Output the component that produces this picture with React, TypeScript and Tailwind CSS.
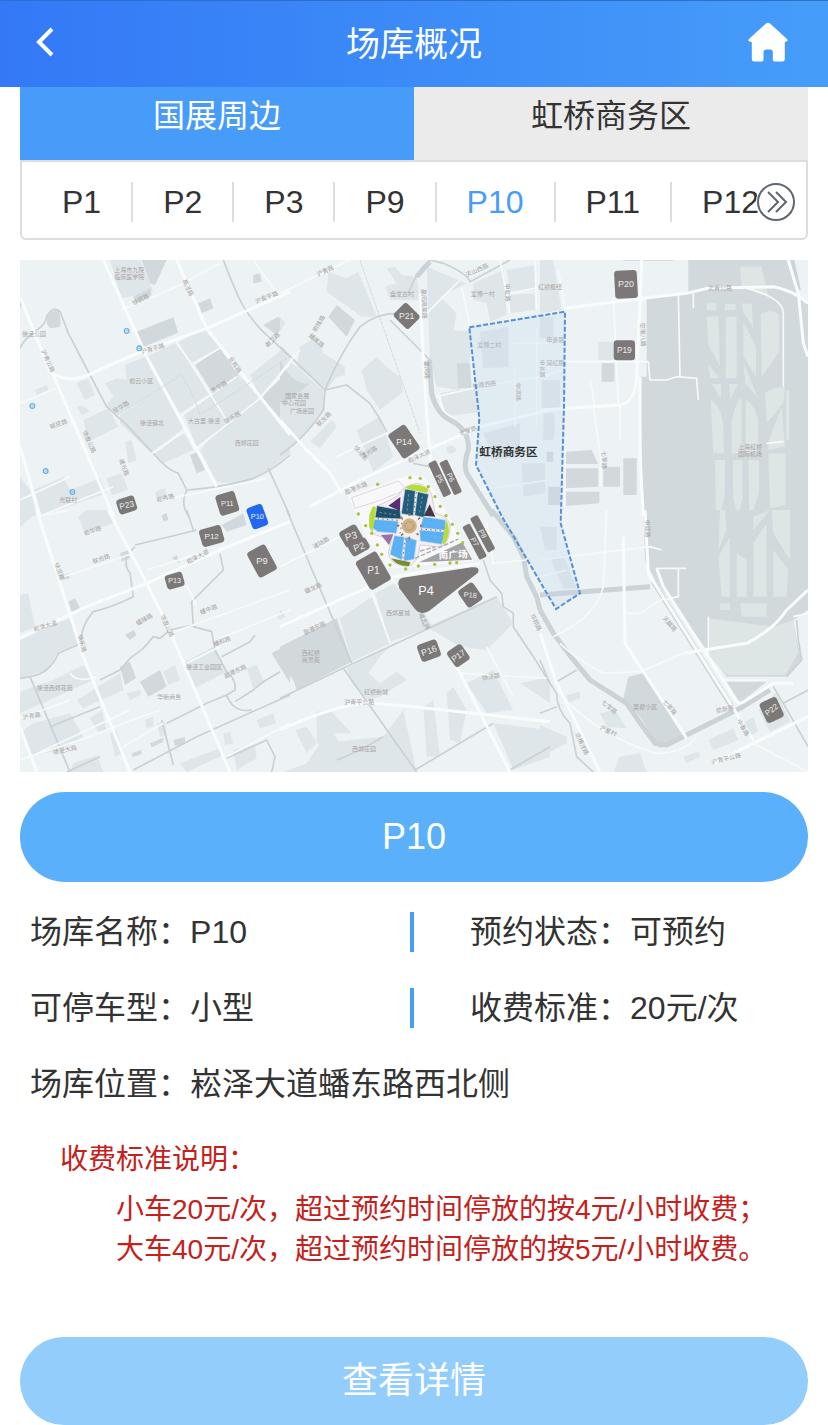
import { useState } from 'react'
import clsx from 'clsx'

const areas = ['国展周边', '虹桥商务区']
const lots = ['P1', 'P2', 'P3', 'P9', 'P10', 'P11', 'P12']

const details = [
  [
    { label: '场库名称', value: 'P10' },
    { label: '预约状态', value: '可预约' },
  ],
  [
    { label: '可停车型', value: '小型' },
    { label: '收费标准', value: '20元/次' },
  ],
]

type Tile = {
  x: number
  y: number
  light: string
  dark: string
  grass?: string
  streams: string
  canals?: string
  lanes: string
  roads: string
}

// 底图按 3x2 分块绘制，每块使用自己的坐标
const tiles: Tile[] = [
  {
    x: 0,
    y: 0,
    light:
      'M270 0L360 0L400 95L305 115zM470 250L550 205L600 265L520 310zM380 290L465 250L520 320L570 400L480 460zM315 315L375 290L425 380L295 465L255 440L280 410L255 370L290 355L320 360zM300 465L425 380L495 500L395 580L300 490zM490 460L570 405L650 340L720 410L620 490L530 560zM540 570L610 490L720 410L810 520V580Q740 640 700 655Q640 675 590 665zM190 480L265 445L295 500L205 545zM400 585L490 515L520 570L430 610zM170 370L205 355L225 405L195 420zM690 345L790 265L810 300L720 410zM40 690L130 650L150 690L240 655L260 700L60 768zM0 650L30 690L50 768H0zM260 655L305 640L325 690L275 705zM315 545L335 540L350 600L325 610zM45 390L80 375L85 390L50 405zM405 695L435 685L440 710L410 715zM170 440Q190 430 210 455L185 465z',
    dark:
      'M350 215L460 172L475 218L360 265zM525 315L600 265L655 345L575 395zM365 0H440L405 75L390 70zM340 110L390 85L395 105L350 130zM730 195L775 170L795 190L770 225zM535 130L570 115L580 145L545 160zM700 45L720 40L725 65L700 70zM510 585L535 575L555 630L530 640zM725 410L810 330V510zM80 190Q80 150 115 150Q125 180 120 200L90 205zM0 110L10 130L0 145z',
    streams:
      'M0 265Q10 240 45 215Q80 190 80 170Q100 135 120 155Q130 180 145 220L210 345L260 440L320 495L400 580Q440 630 475 640L500 690Q620 680 700 655Q760 630 810 585M500 690Q480 730 505 768M610 0Q640 80 665 130Q700 190 740 225L810 290M745 625L810 768',
    lanes:
      'M305 150L470 80L600 10M470 245L620 480M520 310L600 265M480 470L650 350M530 565L720 415L810 310M0 430L110 385M0 720L150 650M60 768L280 680M430 720L740 655M700 0L770 100M350 215L330 180M395 580L500 510',
    roads:
      'M0 110L90 335Q150 375 215 340Q300 300 380 270L560 205L810 95M100 345L280 768M250 0L380 290L590 680M470 0L560 205L810 525M0 560L60 768',
  },
  {
    x: 780,
    y: 0,
    light:
      'M145 35L200 55L235 35L290 170L245 170L140 95zM320 25L345 20L365 45L410 50L420 120L330 120L315 80L350 70zM440 20L560 70L480 110L530 160L520 210L575 215L570 300L540 390L470 380L450 300zM580 70L670 30L680 165L630 185L620 130L580 120zM680 30L765 15V90L690 95zM690 105L765 100V150L690 160zM0 280Q60 330 130 390L135 450Q80 530 0 585zM60 260L110 230L130 280L195 320L195 345L170 350L140 390L50 320zM245 330L290 290L320 320L360 350L370 395L300 450L260 390zM230 510L300 470L330 560L340 590L280 635zM90 545L155 480L170 500L120 565zM480 400L590 380L600 455L500 470zM500 560Q520 550 530 570Q515 590 500 575zM0 170L15 190L0 215zM600 215L685 200V320L610 325zM610 520L720 490L720 590L640 600zM725 610H790V700L730 710z',
    dark: 'M145 170L170 135L225 180L200 230zM530 310H570L575 385H535zM0 300Q40 380 90 370L30 420L0 430z',
    streams:
      'M0 585Q80 530 130 450L135 390Q180 280 240 200Q290 160 350 160M385 100Q410 30 450 0L490 10Q560 40 570 65L690 0M0 260L135 390L200 375L270 430L295 470L320 515M330 180L450 300M400 610L450 620L470 660',
    canals: 'M448 300L455 400Q470 460 510 480Q570 510 565 570Q550 610 560 640L640 768M410 50L450 5',
    lanes:
      'M0 100L210 0M430 170L540 60M0 340L60 270M170 590L320 520M470 410L600 380L810 345M660 0L690 160M705 330V500M765 0L770 150M545 80L570 200M690 100L810 75M770 200V500M600 690L810 660M480 410Q480 460 520 470M700 250H810',
    roads: 'M420 100L430 300L440 460L455 640M0 480L80 570L150 640L185 700M90 740L240 660L440 570L600 500L810 450',
  },
  {
    x: 1560,
    y: 0,
    light:
      'M0 0H40L65 150L0 160zM0 170H40V235H0zM5 360H60V445H5zM10 460H40Q50 500 40 540H10zM175 245H220V300H175zM0 610H15V700H0z',
    dark:
      'M445 0L740 0L770 100L804 130V768H310L300 350H320V115L445 100zM75 575L155 570L175 612H75zM75 625H175V680L72 685zM75 695H178V730L75 738zM190 620H240V680H190zM250 595H290V705H250zM185 310H223V365H185zM20 575H40V605H20zM25 680H60V735H25z',
    grass:
      'M600 20H665L685 110L605 80zM500 130H530V150H500zM555 132H587V150H555zM605 130L635 132L640 205L610 155zM500 170L535 168L540 320L505 255zM557 170H590V355H557zM610 185L648 260V350L610 290zM662 165Q680 145 715 160Q722 230 715 280L665 350zM505 315L540 355H512zM515 372H543V417zM568 372H593L571 417zM612 310L652 410L615 370zM675 400Q700 380 735 380L730 430L680 490zM512 420Q545 440 550 500L552 580H520zM575 480Q590 420 605 415V580H575zM617 415Q655 450 655 490V580H617zM685 545L725 440L735 560L685 570zM525 600H555V700L540 768H528zM578 600H608V710L595 765L580 720zM625 600H657V700L640 750L628 760zM685 580H737V735L690 745zM738 390H748V540H738z',
    streams: 'M250 0H400',
    canals: 'M755 0L775 90',
    lanes:
      'M75 305H325L330 360H380L410 350L470 355L475 420M160 440L185 610M240 435V540M220 110L235 430M460 100V145M415 100L420 350M55 30L75 150M75 570V740M182 610V680M680 550L730 545M0 350L70 330M600 80Q730 110 730 160V380M150 360L165 440',
    roads: 'M75 145L310 115L440 100L500 85L700 80Q760 90 804 130M305 0L300 130L290 350Q285 430 240 435L0 450M300 350L300 590L310 768M745 0L775 100L790 250L804 290',
  },
  {
    x: 0,
    y: 750,
    light:
      'M0 380L150 325L185 400L115 425L80 480L0 505zM0 545L100 510L190 465L220 510L110 560L0 610zM0 0H60L0 50zM175 20L200 0H265L280 40L195 70zM0 255L25 250L45 350L0 370zM495 455L580 410L620 485L525 535zM170 570L300 490L310 540L190 595zM10 660L40 640L150 610L190 680L120 720L30 740zM210 625L245 600L260 660L235 665zM430 485L465 465L480 510L445 525zM680 475L710 465L735 520L700 535zM160 760L230 735L250 786H150zM480 760L600 715L610 735L500 786zM640 720L705 705L710 745L650 780zM710 630L760 610L768 640L720 655zM270 670L290 660L310 730L285 740zM320 550L360 540L362 555L330 570zM610 670L630 665L640 700L615 705zM770 320L790 305L795 320L780 330zM375 630L400 620L400 650L380 655zM410 640L435 635L440 675L420 680z',
    dark:
      'M300 470L330 455L348 505L315 525zM360 515L420 480L440 530L385 560zM390 700L430 683V695L395 712zM460 690L495 680V700L465 708zM335 730L365 720V732L338 742zM605 45L670 10L680 45L620 65zM300 130L325 120L330 145L305 155zM145 275L165 265L180 295L155 305zM315 375L340 360L350 375L330 390zM755 430L810 400V520zM425 15L440 10L445 30L430 35zM455 145L470 135L480 160zM120 200L145 190L150 205L130 210z',
    streams:
      'M345 105Q430 85 530 60M500 0L520 60M345 110Q300 150 330 190L340 260Q280 290 220 305Q180 350 185 400L115 430Q90 490 30 500L0 505M30 500L150 786M600 130L610 180L515 275L520 350L575 365L585 420L620 485Q650 510 645 540L620 555Q640 610 695 600M605 440L690 395L705 375M520 345L450 360L420 385L400 380L370 415L330 445L300 480L240 510M440 640L490 615L560 580L620 555M645 575L700 540L730 515L780 485M340 780L530 680L810 555M620 745L740 690L765 740L755 786M425 630L460 765M90 650L240 590M140 786L240 740',
    lanes:
      'M0 625L150 570M0 750L180 690L420 600M450 370L810 240M380 180L540 130M500 225L530 290M600 385L810 300M500 460L600 410M620 740L810 640M80 15L150 0M130 200L340 130M150 490Q170 520 230 500M310 710L430 640M30 740L330 600',
    roads: 'M265 0L380 220L440 340L630 786M50 0L190 440L330 786M0 385L200 290L380 220L600 120L810 35M0 650L50 786',
  },
  {
    x: 780,
    y: 750,
    light:
      'M180 325L275 260L330 400L215 455zM285 250L350 215L430 310L460 350L330 395zM440 350L650 260L700 340L620 420L540 410zM200 475L330 410L300 440L265 490L300 520L350 485L380 510L300 560L265 570L215 520zM110 605L150 600L215 670L160 670L180 700L120 710L80 650L45 660L80 730L110 700zM80 760L120 700L310 680L370 600L410 786H10zM430 590L460 570L480 740L440 740zM500 550L520 530L560 600L540 700L510 690zM560 520L640 480L700 600L620 610zM640 640L810 660V740L700 780zM720 520L810 500V580zM0 300L12 310L0 330z',
    dark: 'M0 410L170 325L215 455L50 540L40 510L0 460z',
    streams:
      'M0 565L210 465L650 260M190 475L410 786M20 0L215 460M610 150L630 210L665 250L670 290L700 310V350L760 440L810 520M405 780L640 640M690 780L810 710M420 310L430 350M170 750Q230 730 310 680',
    canals: 'M635 0L700 80L730 140L740 200L770 260L780 300',
    lanes: 'M270 230L330 400M0 170L180 80M540 490L810 505M620 40L640 160L740 150M330 200L420 310M620 410L700 560',
    roads: 'M0 660Q150 590 260 578L400 590L810 635M520 450L690 786M0 350L200 260L340 200L600 160',
  },
  {
    x: 1560,
    y: 750,
    light:
      'M655 600L710 545L750 635L690 665zM505 690L580 655L595 690L520 720zM430 740L475 725L480 740L440 760zM80 555L120 545L120 565L85 580zM180 610L225 600L260 655L200 650zM0 645L80 680V700L0 740zM220 786L240 740L300 730L320 786zM610 640L640 620L655 665L620 680zM0 50H50V120H15zM30 145L70 140L110 235L70 235z',
    dark:
      'M310 0H804V300L760 330L770 390L785 450L740 500H560L345 210L315 150zM265 500L310 490L440 680L360 715L300 620L250 565zM560 515H680L600 580z',
    grass:
      'M505 325L700 350L760 330L775 430L735 495H560L510 440zM540 0H555L560 60L535 120zM535 140L570 80V260H545zM640 20L690 0L640 60zM590 130L620 150V260H590zM640 100L680 40V260H640zM700 120L745 180L740 260H700zM695 0H750V150L700 70zM540 280H570V300H540zM600 280H680V320H605z',
    streams:
      'M0 450L30 520L50 550Q50 600 90 640L110 740L160 786M50 515L110 480M700 530L730 580L804 710M730 580L804 540M0 610L50 590M770 330L775 390L785 450L740 500',
    canals: 'M0 300L40 370Q90 440 150 510L260 580Q300 640 345 700L380 705L570 610L600 595L690 540M340 215L575 590M0 255L330 230',
    lanes:
      'M350 175H438M415 175V260L370 270M200 0L190 230Q170 320 40 380M0 150L330 110L365 120M255 310H300L370 265M190 490L300 485L430 430M550 510H680M50 540Q170 680 350 730Q430 730 470 680M505 320V440M0 200L80 180M760 320L804 310M190 490Q100 440 60 400M640 700L804 786',
    roads: 'M315 0L325 190L640 690M350 175L370 230L590 575Q600 585 620 570L700 520L760 520M250 80L255 400L440 685M430 430L620 400Q700 360 740 300L804 240M0 370L50 520L180 786M520 760L640 700L804 620',
  },
]

// [文字, x, y, 旋转角度]
const roadLabels: [string, number, number, number][] = [
  ['上海市九院', 328, 36, 0],
  ['临床医学院', 328, 56, 0],
  ['徐民路', 365, 124, -25],
  ['高泾路', 498, 86, 65],
  ['沪青平路', 742, 118, -22],
  ['沪青平路', 400, 272, -15],
  ['徐泾公园', 42, 228, 0],
  ['沪青公路', 78, 306, 65],
  ['谢卫路', 762, 244, -45],
  ['业辉路', 640, 318, 55],
  ['京华路', 600, 386, -30],
  ['前云小区', 364, 368, 0],
  ['徐华路', 306, 446, -30],
  ['徐乐路', 640, 478, -30],
  ['徐泾镇北', 396, 494, 0],
  ['大古里·徐泾', 552, 488, 0],
  ['西郊庄园', 680, 556, 0],
  ['联民路', 118, 498, -20],
  ['徐盈公路', 202, 548, 65],
  ['诸光路', 306, 624, 70],
  ['光联村', 145, 726, 0],
  ['崧秀路', 438, 720, -15],
  ['国家会展', 832, 414, 0],
  ['中心花园', 822, 436, 0],
  ['广场嘉园', 846, 458, 0],
  ['沪青路', 918, 38, -25],
  ['盘龙古村', 1146, 108, 0],
  ['嘉闵高架路', 1206, 132, 88],
  ['明珠路', 902, 194, -60],
  ['蟠龙路', 886, 246, 40],
  ['嘉闵路', 1214, 330, 88],
  ['天山西路', 1374, 36, -25],
  ['爱博一村', 1388, 108, 0],
  ['爱博二村', 1408, 260, 0],
  ['申虹路', 1456, 98, 88],
  ['申滨路', 1488, 396, 88],
  ['申长路', 1560, 326, 88],
  ['仙霞西路', 1394, 380, -8],
  ['北翟路', 1346, 518, -20],
  ['崧泽大道', 1200, 594, -25],
  ['盈港东路', 1010, 690, -22],
  ['诸光路', 1050, 582, -30],
  ['徐泾东', 1018, 584, 50],
  ['联友路', 916, 482, -45],
  ['虹桥枢纽', 1590, 88, 0],
  ['申贵路', 1606, 246, 0],
  ['润虹路', 1606, 314, 0],
  ['北青公路', 2100, 90, 0],
  ['空港八路', 1862, 224, 88],
  ['七莘路', 1746, 600, 88],
  ['上海虹桥', 2190, 568, 0],
  ['国际机场', 2190, 588, 0],
  ['崧华路', 220, 818, -20],
  ['联合路', 246, 902, -20],
  ['徐灵路', 112, 936, 70],
  ['崧泽大道', 536, 896, -28],
  ['崧泽大道', 78, 1104, -18],
  ['徐乐路', 180, 1152, 75],
  ['蟠臻路', 376, 1084, -30],
  ['徐盈公路', 436, 1100, 65],
  ['蟠中路', 568, 1054, -20],
  ['蟠和路', 608, 1150, -20],
  ['徐泾工业园区', 552, 1228, 0],
  ['盈港东路', 648, 1240, -25],
  ['徐泾西郊花苑', 104, 1290, 0],
  ['华新商务', 448, 1318, 0],
  ['沪青路', 36, 1374, -10],
  ['徐泾大路', 136, 1476, -12],
  ['诸陆路', 906, 854, -30],
  ['蟠龙路', 882, 990, -25],
  ['盈港东路', 886, 1110, -25],
  ['西虹桥', 872, 1184, 0],
  ['尚景苑', 872, 1206, 0],
  ['西郊星城', 1134, 1064, 0],
  ['诸光路', 1208, 1086, 65],
  ['虹桥新城', 1068, 1302, 0],
  ['沪青平公路', 1018, 1332, 0],
  ['西郊庄园', 1032, 1474, 0],
  ['徐泾路', 1414, 1256, -10],
  ['华翔路', 1542, 1090, 65],
  ['申昆路', 1876, 806, 88],
  ['天麟路', 1944, 1096, 50],
  ['七宝路', 1764, 1346, 40],
  ['七莘路', 1944, 1346, 50],
  ['吴翟小区', 1876, 1348, 0],
  ['航新路', 2116, 1354, -10],
  ['中春路', 2164, 1406, 60],
  ['沪青平公路', 2120, 1502, -14],
  ['北横泾路', 1680, 1454, 65],
  ['沪星村', 1762, 1418, 25],
]

// 国展周边停车场标记
const pins = [
  { name: 'P23', x: 320, y: 735, w: 56, h: 46, rotate: -18, text: -12, size: 25 },
  { name: 'P11', x: 622, y: 730, w: 60, h: 64, rotate: -17, text: 0, size: 22 },
  { name: 'P10', x: 712, y: 770, w: 50, h: 68, rotate: -20, text: 0, size: 22 },
  { name: 'P12', x: 575, y: 828, w: 68, h: 54, rotate: -16, text: 0, size: 24 },
  { name: 'P9', x: 726, y: 903, w: 62, h: 86, rotate: -28, text: 0, size: 28 },
  { name: 'P13', x: 464, y: 962, w: 54, h: 44, rotate: -16, text: 0, size: 22 },
  { name: 'P20', x: 1818, y: 73, w: 68, h: 84, rotate: -3, text: 0, size: 27 },
  { name: 'P19', x: 1813, y: 271, w: 64, h: 60, rotate: 0, text: 0, size: 25 },
  { name: 'P21', x: 1160, y: 168, w: 56, h: 64, rotate: -45, text: 0, size: 26 },
  { name: 'P14', x: 1152, y: 545, w: 62, h: 88, rotate: -34, text: 0, size: 26 },
  { name: 'P3', x: 993, y: 828, w: 58, h: 54, rotate: -30, text: -15, size: 30 },
  { name: 'P2', x: 1017, y: 861, w: 60, h: 38, rotate: -30, text: -20, size: 28 },
  { name: 'P1', x: 1060, y: 932, w: 72, h: 98, rotate: -30, text: 0, size: 30 },
  { name: 'P5', x: 1259, y: 656, w: 26, h: 112, rotate: -25, text: 65, size: 22 },
  { name: 'P6', x: 1292, y: 652, w: 26, h: 108, rotate: -25, text: 65, size: 22 },
  { name: 'P7', x: 1364, y: 845, w: 25, h: 112, rotate: -28, text: 62, size: 22 },
  { name: 'P8', x: 1388, y: 821, w: 25, h: 116, rotate: -28, text: 62, size: 22 },
  { name: 'P18', x: 1351, y: 1005, w: 54, h: 62, rotate: -35, text: 5, size: 22 },
  { name: 'P16', x: 1227, y: 1172, w: 62, h: 54, rotate: -20, text: -20, size: 27 },
  { name: 'P17', x: 1315, y: 1187, w: 52, h: 56, rotate: -35, text: -35, size: 25 },
  { name: 'P22', x: 2255, y: 1350, w: 56, h: 66, rotate: -25, text: -38, size: 24 },
]

const metroStations = [
  [320, 213],
  [358, 265],
  [37, 438],
  [77, 633],
  [157, 696],
]

const trees = [
  [128, 58], [70, 147], [92, 182], [110, 205], [127, 240], [140, 268], [165, 300],
  [212, 312], [250, 303], [299, 298], [345, 294], [365, 293], [383, 233], [368, 205],
  [352, 178], [333, 152], [316, 124], [300, 95], [280, 65], [256, 40], [225, 38],
]

function ExpoCenter() {
  return (
    <g transform="translate(945 615)">
      <path d="M38 92L215 33L265 32L300 80L415 288L200 308L160 308L100 225z" fill="#f8f8fa" />
      <path d="M50 98L190 48L208 66L200 80L130 108L60 130z" fill="none" stroke="#e3d5dd" strokeWidth="3" />
      <path d="M105 190Q95 130 130 122L190 92Q205 60 245 55Q280 60 290 90L300 145Q350 155 345 195Q340 245 310 245L255 240Q250 300 215 305Q165 300 160 265L170 220Q110 215 105 190z" fill="#f3eff2" stroke="#d8cfd6" strokeWidth="3" />
      {/* 展厅 */}
      <g stroke="#c8d4dc" strokeWidth="2">
        <path d="M210 72L241 77L235 152L199 146zM248 80L281 88L267 158L239 151z" fill="#235d7c" />
        <path d="M126 122L195 135L198 162L120 158z" fill="#1e506b" />
        <path d="M118 163L190 169L184 205L128 200L112 188z" fill="#58b0f5" />
        <path d="M265 155L331 165V196L256 188zM254 195L330 201L320 238L256 228z" fill="#58b0f5" />
        <path d="M178 212L208 216L200 285L165 268zM213 216L245 226L237 283L206 288z" fill="#58b0f5" />
      </g>
      <path d="M212 66Q245 50 280 72L276 84L218 72zM103 185Q100 145 115 123L123 128L114 200zM334 165Q352 200 328 238L321 235z" fill="#b5dd36" />
      <path d="M168 280L226 292L222 303Q190 306 168 280z" fill="#788b32" />
      <path d="M160 122L196 96L195 138z" fill="#5a2d79" />
      <path d="M138 210L175 208L162 240z" fill="#9872ac" />
      <path d="M284 118L301 155L266 152z" fill="#453746" />
      {/* 中央广场 */}
      <path d="M196 155L250 210M255 158L198 212M223 145V225M185 182H262" stroke="#8c6f5a" strokeWidth="5" strokeDasharray="8 6" />
      <circle cx="223" cy="183" r="25" fill="#cdb38b" stroke="#f4eee5" strokeWidth="5" />
      <circle cx="223" cy="183" r="13" fill="none" stroke="#b8996d" strokeWidth="3" />
      <path d="M134 142L185 150M130 180L180 188M275 172L325 180M270 210L318 218M184 230L180 268M226 232L220 275M221 88L216 138M262 95L254 142" stroke="#8fb5d2" strokeWidth="2" strokeDasharray="7 7" />
      <path d="M203 160L195 205M128 161L190 166M258 192L328 198M211 220L203 284M244 82L236 148" stroke="#7d6068" strokeWidth="3" strokeDasharray="4 10" />
      {/* 南广场 */}
      <path d="M252 292L382 232L412 284z" fill="#a2a3a5" />
      <path d="M240 280L370 222M255 258L300 246" stroke="#a9a9ad" strokeWidth="4" strokeDasharray="14 5" />
      <text x="355" y="280" fontSize="29" fontWeight="700" fill="#fff" textAnchor="middle" transform="rotate(-3 355 280)">
        南广场
      </text>
      {trees.map(([x, y]) => (
        <circle key={`${x}-${y}`} cx={x} cy={y} r="5" fill="#a5c43c" />
      ))}
    </g>
  )
}

function ParkingMap({ selected }: { selected: string }) {
  return (
    <svg viewBox="0 0 2364 1536" className="block h-auto w-full" role="img" aria-label="停车场分布图">
      <rect width="2364" height="1536" fill="#edf3f4" />
      {tiles.map((t) => (
        <g key={`area-${t.x}-${t.y}`} transform={`translate(${t.x} ${t.y})`}>
          <path d={t.light} fill="#dfe6e9" />
          <path d={t.dark} fill="#d1d9dc" />
          {t.grass && <path d={t.grass} fill="#dde5e5" />}
        </g>
      ))}
      {tiles.map((t) => (
        <g key={`line-${t.x}-${t.y}`} transform={`translate(${t.x} ${t.y})`} fill="none" strokeLinejoin="round">
          <path d={t.streams} stroke="#c9d1d4" strokeWidth="5" />
          {t.canals && <path d={t.canals} stroke="#cbd3d6" strokeWidth="15" />}
          <path d={t.lanes} stroke="#f6fafa" strokeWidth="5" />
          <path d={t.roads} stroke="#f9fcfc" strokeWidth="9" />
        </g>
      ))}
      <path d="M290 465L485 345Q520 400 540 465L810 290M1020 0L1200 520" fill="none" stroke="#d3dadc" strokeWidth="3" strokeDasharray="10 3" />

      <g fontSize="18" fill="#a8a2a4" textAnchor="middle">
        {roadLabels.map(([text, x, y, rotate]) => (
          <text key={`${x}-${y}`} x={x} y={y} transform={`rotate(${rotate} ${x} ${y})`}>
            {text}
          </text>
        ))}
      </g>

      {metroStations.map(([x, y]) => (
        <g key={`${x}-${y}`} fill="none" stroke="#6db2df">
          <circle cx={x} cy={y} r="7" strokeWidth="4" />
          <path d={`M${x - 3} ${y}h6`} strokeWidth="3" />
        </g>
      ))}

      {/* 虹桥商务区范围 */}
      <path
        d="M1348 202L1635 155L1632 440L1622 790L1680 1000L1608 1047L1445 768L1368 615L1378 475z"
        fill="#c3d3ec"
        fillOpacity="0.26"
        stroke="#5590d6"
        strokeWidth="6"
        strokeDasharray="15 6"
      />
      <text x="1378" y="589" fontSize="35" fontWeight="700" fill="#333">
        虹桥商务区
      </text>

      <ExpoCenter />

      <path
        d="M1148 953L1355 922Q1382 920 1374 938L1228 1052Q1202 1068 1184 1046L1138 985Q1128 958 1148 953z"
        fill="#7b7877"
      />
      <text x="1218" y="1004" fontSize="38" fill="#fff" textAnchor="middle">
        P4
      </text>
      {pins.map((p) => (
        <g key={p.name} transform={`translate(${p.x} ${p.y})`}>
          <rect
            x={-p.w / 2}
            y={-p.h / 2}
            width={p.w}
            height={p.h}
            rx={p.w < 30 ? 5 : 10}
            transform={`rotate(${p.rotate})`}
            fill={p.name === selected ? '#2369f0' : '#7b7877'}
          />
          <text fontSize={p.size} fill="#eee" textAnchor="middle" dominantBaseline="central" transform={`rotate(${p.text})`}>
            {p.name}
          </text>
        </g>
      ))}
    </svg>
  )
}

export default function App() {
  const [area, setArea] = useState(areas[0])
  const [selected, setSelected] = useState('P10')

  return (
    <div className="bg-white font-['Liberation_Sans','Noto_Sans_CJK_SC',sans-serif] text-[32px] leading-10 text-[#333]">
      <header className="flex h-[87px] items-center justify-between border-t border-[#2d6fc4] bg-linear-to-r from-[#3478f6] to-[#469df9] px-10 pb-1 text-white">
        <button type="button" aria-label="返回" className="-ml-1 w-12">
          <svg viewBox="0 0 18 30" className="h-[30px] w-[18px]" fill="none" stroke="currentColor" strokeWidth="4">
            <path d="M16 2L3 15L16 28" />
          </svg>
        </button>
        <h1 className="pt-1 text-[34px]">场库概况</h1>
        <a href="#home" aria-label="首页" className="flex w-11 justify-end">
          <svg viewBox="0 0 40 40" className="size-10" fill="currentColor">
            <path d="M18 1.5Q20 -.2 22 1.5L39 17Q40.5 18.8 38.5 19.5L36.8 20V37Q36.8 39.5 34.5 39.5H26.5Q24.8 39.5 24.8 37.5V30.5Q24.8 27.5 22.5 27.5H18.5Q15.5 27.5 15.5 30.5V37.5Q15.5 39.5 13.8 39.5H6.2Q3.8 39.5 3.8 37V20L1.5 19.5Q-.5 18.8 1 17z" />
          </svg>
        </a>
      </header>

      <main className="px-5">
        <div className="grid h-[73px] grid-cols-2">
          {areas.map((name) => (
            <button
              key={name}
              type="button"
              onClick={() => setArea(name)}
              className={clsx('pb-4', name === area ? 'bg-[#489cf9] text-white' : 'bg-[#ebebeb]')}
            >
              {name}
            </button>
          ))}
        </div>

        <nav className="relative rounded-b-md border-2 border-[#ddd]">
          <ul className="flex overflow-hidden pt-5 pb-4 pl-[10px]">
            {lots.map((lot) => (
              <li key={lot} className="shrink-0 border-r-2 border-[#ddd] last:border-r-0">
                <button
                  type="button"
                  onClick={() => setSelected(lot)}
                  className={clsx('block px-[30px]', lot === selected && 'text-[#489cf9]')}
                >
                  {lot}
                </button>
              </li>
            ))}
          </ul>
          <button type="button" aria-label="更多停车场" className="absolute top-5 right-[10px] rounded-full bg-white">
            <svg viewBox="0 0 40 40" className="size-10" fill="none" stroke="#5f6670" strokeWidth="2">
              <circle cx="20" cy="20" r="18" />
              <path d="M12 10L22 20L12 30M20 10L30 20L20 30" />
            </svg>
          </button>
        </nav>

        <section className="mt-5">
          <ParkingMap selected={selected} />
        </section>

        <h2 className="mt-5 flex h-[90px] items-center justify-center rounded-full bg-[#5bb0fb] text-[36px] text-white">
          {selected}
        </h2>

        <dl className="mt-[30px] pr-[18px] pl-[10px]">
          {details.map(([left, right]) => (
            <div key={left.label} className="mb-9 grid grid-cols-2">
              <div className="flex">
                <dt>{left.label}：</dt>
                <dd>{left.value}</dd>
              </div>
              <div className="flex border-l-4 border-[#489cf9] pl-14">
                <dt>{right.label}：</dt>
                <dd>{right.value}</dd>
              </div>
            </div>
          ))}
          <div className="flex">
            <dt>场库位置：</dt>
            <dd>崧泽大道蟠东路西北侧</dd>
          </div>
        </dl>

        <section className="mt-9 pl-10 text-[28px] text-[#c4211c]">
          <h3>收费标准说明：</h3>
          <p className="mt-[10px] pl-14">小车20元/次，超过预约时间停放的按4元/小时收费；</p>
          <p className="pl-14">大车40元/次，超过预约时间停放的按5元/小时收费。</p>
        </section>

        <button type="button" className="mt-[67px] block h-[88px] w-full rounded-full bg-[#92cdfb] text-[36px] text-white">
          查看详情
        </button>
      </main>
    </div>
  )
}
